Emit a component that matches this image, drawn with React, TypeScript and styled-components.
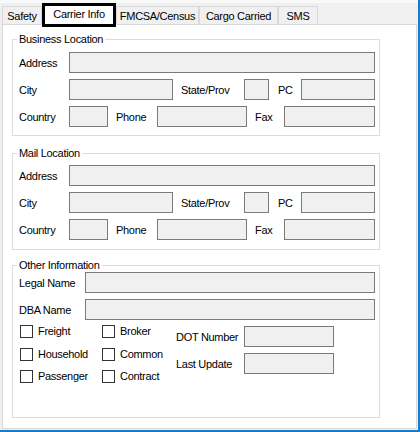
import React from "react";
import styled, { createGlobalStyle } from "styled-components";

const GlobalStyle = createGlobalStyle`
  html, body {
    margin: 0;
    padding: 0;
    background: #f0f0f0;
  }
  body {
    font-family: "Liberation Sans", Arial, sans-serif;
    font-size: 11px;
    letter-spacing: -0.3px;
    color: #000;
  }
`;

const Frame = styled.div`
  width: 418px;
  height: 430px;
  background: #f0f0f0;
  border-right: 2px solid #1979ca;
  border-bottom: 2px solid #1979ca;
  display: flex;
  flex-direction: column;
`;

const TopStrip = styled.div`
  height: 3px;
  background: #f9f9f9;
`;

const TabBar = styled.div`
  display: flex;
  align-items: flex-end;
  height: 21px;
  padding-left: 2px;
`;

const Tab = styled.div<{ $w: number; $active?: boolean }>`
  box-sizing: border-box;
  width: ${(p) => p.$w}px;
  display: flex;
  align-items: center;
  justify-content: center;
  white-space: nowrap;
  ${(p) =>
    p.$active
      ? `
    height: 24px;
    margin-bottom: -3px;
    border: 3px solid #000;
    background: #fff;
    position: relative;
    z-index: 1;
    padding-bottom: 2px;
  `
      : `
    height: 18px;
    border: 1px solid #d9d9d9;
    border-bottom: none;
    background: #f0f0f0;
    padding-top: 1px;
  `}
`;

const Panel = styled.div`
  box-sizing: border-box;
  margin-left: 2px;
  width: 415px;
  height: 405px;
  background: #fff;
  border: 1px solid #d9d9d9;
  padding: 7px 0 0 9px;
  display: flex;
  flex-direction: column;
`;

const Group = styled.fieldset<{ $pad: string; $gap?: number; $h?: number }>`
  box-sizing: border-box;
  width: 368px;
  min-inline-size: 0;
  margin: ${(p) => p.$gap ?? 0}px 0 0 0;
  padding: ${(p) => p.$pad};
  border: 1px solid #dcdcdc;
  ${(p) => (p.$h ? `height: ${p.$h}px;` : "")}
  display: flex;
  flex-direction: column;
  gap: 6px;
`;

const GroupTitle = styled.legend`
  margin-left: -2px;
  padding: 0 2px;
  line-height: 14px;
  font-size: 11px;
`;

const Row = styled.div`
  display: flex;
  align-items: center;
  height: 21px;
`;

const Label = styled.span<{ $w: number; $ml?: number }>`
  flex: none;
  width: ${(p) => p.$w}px;
  margin-left: ${(p) => p.$ml ?? 0}px;
  line-height: 14px;
  white-space: nowrap;
`;

const TextBox = styled.div<{ $w?: number }>`
  box-sizing: border-box;
  height: 21px;
  ${(p) => (p.$w ? `width: ${p.$w}px; flex: none;` : "flex: 1;")}
  background: #f0f0f0;
  border: 1px solid #7a7a7a;
`;

const Bottom = styled.div`
  display: flex;
  margin-top: -1px;
`;

const CheckGrid = styled.div`
  display: grid;
  grid-template-columns: 82px 74px;
  grid-auto-rows: 13px;
  row-gap: 9.5px;
  padding-left: 1px;
`;

const CheckItem = styled.label`
  display: flex;
  align-items: center;
  gap: 5px;
  line-height: 13px;
  white-space: nowrap;
`;

const CheckBox = styled.span`
  box-sizing: border-box;
  width: 13px;
  height: 13px;
  flex: none;
  background: #fff;
  border: 1px solid #333;
`;

const SideFields = styled.div`
  display: flex;
  flex-direction: column;
  gap: 6px;
  margin-top: 1px;
`;

const tabs = [
  { name: "Safety", w: 40 },
  { name: "Carrier Info", w: 74, active: true },
  { name: "FMCSA/Census", w: 83 },
  { name: "Cargo Carried", w: 79 },
  { name: "SMS", w: 40 },
];

const LocationGroup = ({ title, pad, gap }: { title: string; pad: string; gap?: number }) => (
  <Group $pad={pad} $gap={gap}>
    <GroupTitle>{title}</GroupTitle>
    <Row>
      <Label $w={50}>Address</Label>
      <TextBox />
    </Row>
    <Row>
      <Label $w={50}>City</Label>
      <TextBox $w={104} />
      <Label $w={63} $ml={8}>State/Prov</Label>
      <TextBox $w={25} />
      <Label $w={23} $ml={9}>PC</Label>
      <TextBox />
    </Row>
    <Row>
      <Label $w={50}>Country</Label>
      <TextBox $w={39} />
      <Label $w={41} $ml={8}>Phone</Label>
      <TextBox $w={90} />
      <Label $w={29} $ml={8}>Fax</Label>
      <TextBox />
    </Row>
  </Group>
);

const checks = ["Freight", "Broker", "Household", "Common", "Passenger", "Contract"];

export default function App() {
  return (
    <>
      <GlobalStyle />
      <Frame>
        <TopStrip />
        <TabBar>
          {tabs.map((t) => (
            <Tab key={t.name} $w={t.w} $active={t.active}>
              {t.name}
            </Tab>
          ))}
        </TabBar>
        <Panel>
          <LocationGroup title="Business Location" pad="6px 4px 8px 6px" />
          <LocationGroup title="Mail Location" pad="5px 4px 9px 6px" gap={10} />
          <Group $pad="0 4px 0 6px" $gap={8} $h={160}>
            <GroupTitle>Other Information</GroupTitle>
            <Row>
              <Label $w={66}>Legal Name</Label>
              <TextBox />
            </Row>
            <Row>
              <Label $w={66}>DBA Name</Label>
              <TextBox />
            </Row>
            <Bottom>
              <CheckGrid>
                {checks.map((c) => (
                  <CheckItem key={c}>
                    <CheckBox />
                    {c}
                  </CheckItem>
                ))}
              </CheckGrid>
              <SideFields>
                <Row>
                  <Label $w={68}>DOT Number</Label>
                  <TextBox $w={90} />
                </Row>
                <Row>
                  <Label $w={68}>Last Update</Label>
                  <TextBox $w={90} />
                </Row>
              </SideFields>
            </Bottom>
          </Group>
        </Panel>
      </Frame>
    </>
  );
}
